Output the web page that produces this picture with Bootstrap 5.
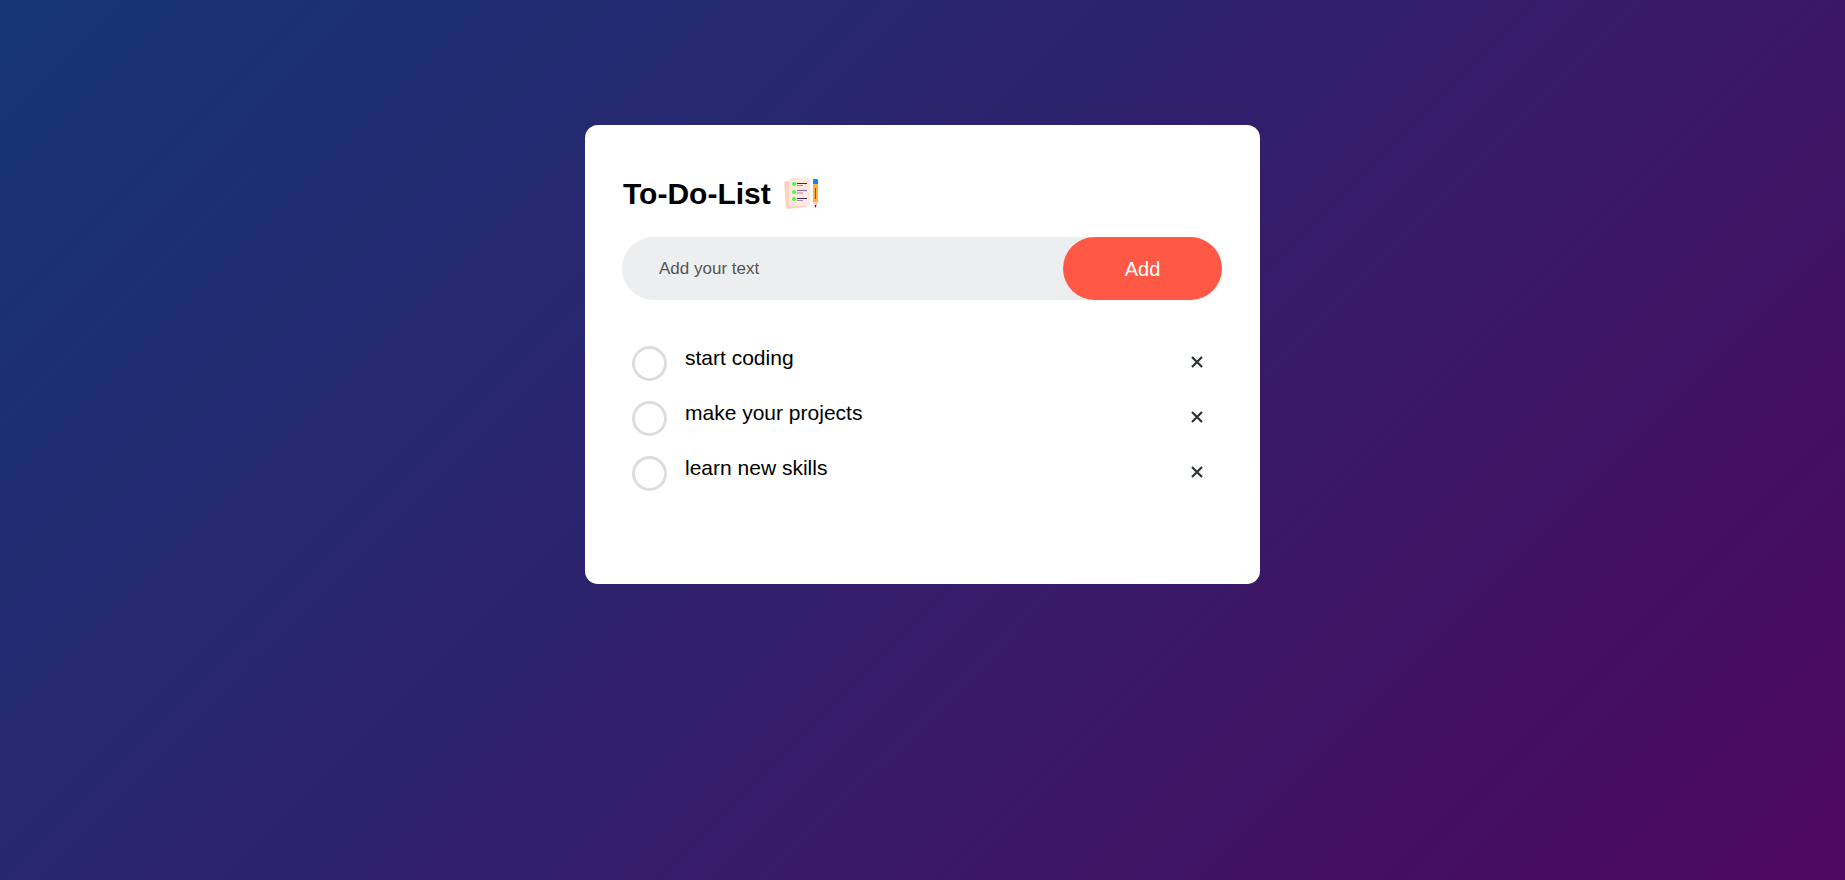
<!DOCTYPE html>
<html lang="en">
<head>
<meta charset="utf-8">
<meta name="viewport" content="width=device-width, initial-scale=1">
<title>To-Do-List</title>
<link href="https://cdn.jsdelivr.net/npm/bootstrap@5.3.0/dist/css/bootstrap.min.css" rel="stylesheet">
<style>
body { font-family: "Liberation Sans", Arial, sans-serif; color: #000; background: linear-gradient(135deg, #153677, #4e085f) fixed; }
.todo-app { max-width: 675px; margin: 125px auto 25px; padding: 51px 38px 83px 37px; border-radius: 13px; }
.todo-title { font-size: 30px; line-height: 36px; gap: 12px; margin-bottom: 25px; padding-left: 1px; }
.todo-entry { background: #edeef0; height: 63px; margin-bottom: 36px; }
.todo-entry input { font-size: 17px; padding-left: 37px; color: #000; min-width: 0; outline: 0; }
.todo-entry input::placeholder { color: #555; opacity: 1; }
.todo-add { --bs-btn-color: #fff; --bs-btn-bg: #ff5945; --bs-btn-hover-color: #fff; --bs-btn-hover-bg: #f04b37; --bs-btn-active-bg: #f04b37; --bs-btn-font-size: 20px; --bs-btn-border-width: 0; width: 159px; }
.todo-item { height: 55px; padding: 10px 0 10px 10px; font-size: 21px; line-height: 24px; }
.todo-label { padding-left: 18px; }
.todo-check { width: 35px; height: 35px; border: 3px solid #ddd; appearance: none; background: #fff; }
.todo-check:checked { background: #ff5945; border-color: #ff5945; }
.todo-remove { width: 50px; height: 31px; color: #2b3235; }
</style>
</head>
<body class="min-vh-100">
<main class="px-3">
  <section class="todo-app bg-white">
    <h1 class="todo-title fw-bold d-flex align-items-center">To-Do-List
      <svg width="36" height="34" viewBox="0 0 36 34" aria-hidden="true">
        <path d="M3 4l18-2 3 28-19 2q-2 0-2-2L1 6q0-2 2-2z" fill="#ffd2c4"/>
        <rect x="6" y="1" width="21" height="28" rx="2" fill="#ffe9df"/>
        <g fill="#3dff3d"><circle cx="11" cy="7" r="2"/><circle cx="11" cy="15" r="2"/><circle cx="11" cy="22" r="2"/></g>
        <path d="M14 6.5h10M14 21.5h10" stroke="#39265f" stroke-width="1.1"/>
        <path d="M14 13.5h10" stroke="#897399" stroke-width="1.2"/>
        <path d="M14 8.5h6M14 16h6M14 23.5h6" stroke="#9c83a5" stroke-width=".9"/>
        <path d="M30 7h5v18h-5z" fill="#ffb13b"/>
        <path d="M30 3q0-1 1-1h3q1 0 1 1v4h-5z" fill="#0b86f5"/>
        <path d="M32.5 11v11" stroke="#805329" stroke-width="1"/>
        <path d="M30 25h5l-2.500 5z" fill="#ffc3c3"/><path d="M31.500 28h2l-1 3z" fill="#222"/>
      </svg>
    </h1>
    <form class="todo-entry d-flex rounded-pill" onsubmit="return false">
      <input type="text" class="flex-grow-1 border-0 bg-transparent" placeholder="Add your text" aria-label="Add your text">
      <button type="submit" class="btn todo-add rounded-pill flex-shrink-0">Add</button>
    </form>
    <ul class="list-unstyled mb-0">
      <li class="todo-item d-flex">
        <input class="todo-check rounded-circle flex-shrink-0" type="checkbox" id="task-1">
        <label class="flex-grow-1 todo-label" for="task-1">start coding</label>
        <button type="button" class="todo-remove border-0 bg-transparent p-0 d-flex align-items-center justify-content-center" aria-label="Remove start coding"><svg width="12" height="12" viewBox="0 0 12 12"><path d="M1 1l10 10M11 1L1 11" stroke="currentColor" stroke-width="2.200"/></svg></button>
      </li>
      <li class="todo-item d-flex">
        <input class="todo-check rounded-circle flex-shrink-0" type="checkbox" id="task-2">
        <label class="flex-grow-1 todo-label" for="task-2">make your projects</label>
        <button type="button" class="todo-remove border-0 bg-transparent p-0 d-flex align-items-center justify-content-center" aria-label="Remove make your projects"><svg width="12" height="12" viewBox="0 0 12 12"><path d="M1 1l10 10M11 1L1 11" stroke="currentColor" stroke-width="2.200"/></svg></button>
      </li>
      <li class="todo-item d-flex">
        <input class="todo-check rounded-circle flex-shrink-0" type="checkbox" id="task-3">
        <label class="flex-grow-1 todo-label" for="task-3">learn new skills</label>
        <button type="button" class="todo-remove border-0 bg-transparent p-0 d-flex align-items-center justify-content-center" aria-label="Remove learn new skills"><svg width="12" height="12" viewBox="0 0 12 12"><path d="M1 1l10 10M11 1L1 11" stroke="currentColor" stroke-width="2.200"/></svg></button>
      </li>
    </ul>
  </section>
</main>
<script src="https://cdn.jsdelivr.net/npm/bootstrap@5.3.0/dist/js/bootstrap.bundle.min.js"></script>
</body>
</html>
